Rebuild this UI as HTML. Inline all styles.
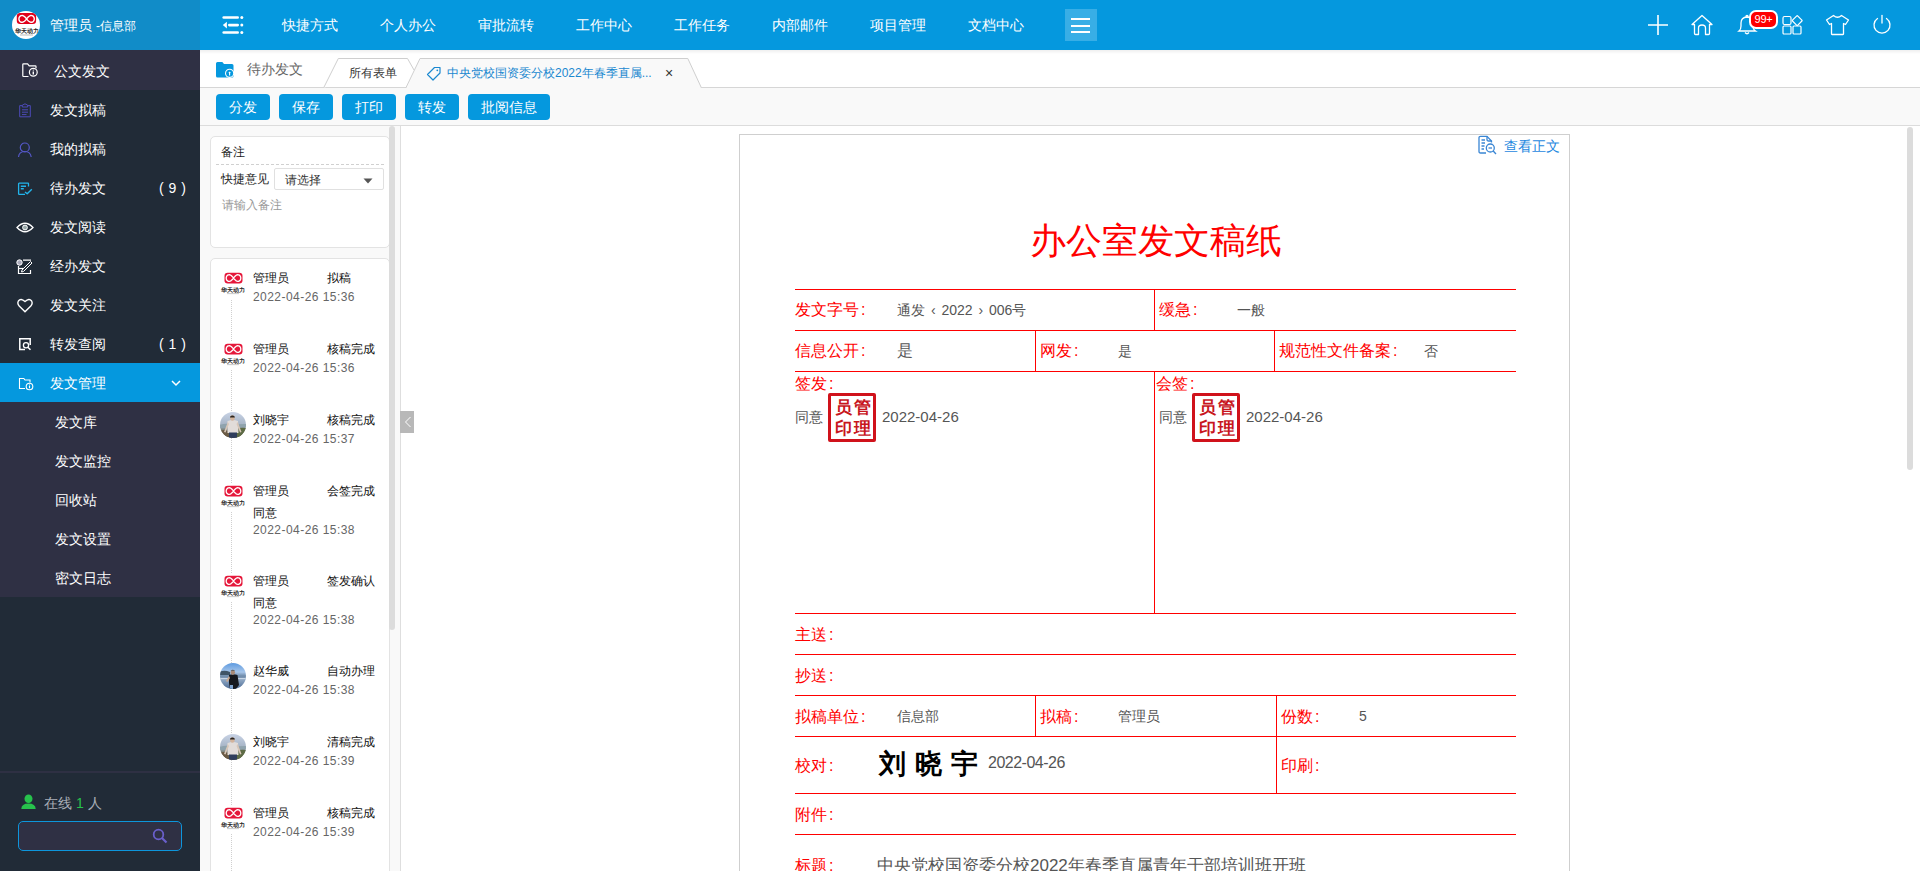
<!DOCTYPE html>
<html><head><meta charset="utf-8">
<style>
*{margin:0;padding:0;box-sizing:border-box}
html,body{width:1920px;height:871px;overflow:hidden;background:#fff;font-family:"Liberation Sans",sans-serif;}
.a{position:absolute;white-space:nowrap}
#hdr{position:absolute;left:0;top:0;width:1920px;height:50px;background:#0598de}
#hdrl{position:absolute;left:0;top:0;width:200px;height:50px;background:#118cc8}
.nav{position:absolute;top:17px;font-size:14px;line-height:16px;color:#fff}
#side{position:absolute;left:0;top:50px;width:200px;height:821px;background:#212b37}
.mi{position:absolute;left:0;width:200px;height:39px;color:#fff;font-size:14px}
.mi .t{position:absolute;left:50px;top:12px;line-height:16px}
.mi svg{position:absolute}
.sub .t{left:55px}
#main{position:absolute;left:200px;top:50px;width:1720px;height:821px;background:#fff}

.btn{top:94px;height:26px;background:#0598de;color:#fff;border-radius:4px;font-size:14px;line-height:26px;text-align:center}
.tn{position:absolute;font-size:12px;line-height:14px;color:#111;white-space:nowrap}
.td{position:absolute;font-size:12px;line-height:14px;color:#666;white-space:nowrap;letter-spacing:0.45px}
.av{width:26px;height:26px;border-radius:50%;overflow:hidden}
.hl{position:absolute;left:795px;width:721px;height:1px;background:#f00}
.vl{position:absolute;width:1px;background:#f00}
.lb{position:absolute;font-size:16px;line-height:18px;color:#f00;white-space:nowrap}
.lb b{font-weight:normal;margin-left:2px}
.vv{position:absolute;font-size:14px;line-height:16px;color:#555;white-space:nowrap}
.stamp{width:48px;height:49px;border:3px solid #d0121b;border-radius:2px}
.stamp span{position:absolute;font-family:'Liberation Serif',serif;font-weight:bold;font-size:17px;line-height:18px;color:#c8161d}
</style></head><body>
<svg width="0" height="0" style="position:absolute">
 <defs>
  <g id="lg">
   <rect x="6.5" y="1.7" width="18" height="10.7" rx="3.2" fill="#e5173a"/>
   <path d="M22.80 7.05 L22.62 8.24 L22.11 9.24 L21.38 9.93 L20.56 10.28 L19.73 10.34 L18.94 10.16 L18.23 9.82 L17.59 9.36 L17.01 8.83 L16.48 8.26 L15.98 7.66 L15.50 7.05 L15.02 6.44 L14.52 5.84 L13.99 5.27 L13.41 4.74 L12.77 4.28 L12.06 3.94 L11.27 3.76 L10.44 3.82 L9.62 4.17 L8.89 4.86 L8.38 5.86 L8.20 7.05 L8.38 8.24 L8.89 9.24 L9.62 9.93 L10.44 10.28 L11.27 10.34 L12.06 10.16 L12.77 9.82 L13.41 9.36 L13.99 8.83 L14.52 8.26 L15.02 7.66 L15.50 7.05 L15.98 6.44 L16.48 5.84 L17.01 5.27 L17.59 4.74 L18.23 4.28 L18.94 3.94 L19.73 3.76 L20.56 3.82 L21.38 4.17 L22.11 4.86 L22.62 5.86Z" fill="none" stroke="#fff" stroke-width="1.3"/>
   <text x="15.2" y="20.8" font-size="5.6" font-weight="bold" text-anchor="middle" fill="#222" font-family="Liberation Sans,sans-serif">华天动力</text>
   <rect x="9" y="22.3" width="12" height="0.8" fill="#bbb"/>
  </g>

  <clipPath id="cc"><circle cx="13" cy="13" r="13"/></clipPath>
  <linearGradient id="sky1" x1="0" y1="0" x2="0" y2="1"><stop offset="0" stop-color="#c9d3e6"/><stop offset="0.45" stop-color="#a9b7c8"/><stop offset="0.6" stop-color="#8f9da6"/><stop offset="0.75" stop-color="#6f705a"/><stop offset="1" stop-color="#5a4a38"/></linearGradient>
  <g id="av1" clip-path="url(#cc)">
   <rect width="26" height="26" fill="url(#sky1)"/>
   <path d="M0 13 Q6 11 12 12.5 L26 12 L26 15 L0 16Z" fill="#8fa3ad"/>
   <path d="M16 17 Q21 15 26 16 L26 26 L16 26Z" fill="#5d6b45"/>
   <path d="M0 19 Q4 17 8 19 L8 26 L0 26Z" fill="#6a5a45"/>
   <path d="M7.5 9 Q13 7 18 9 L18.5 21 L7.5 21Z" fill="#e2dcd9"/>
   <path d="M7.8 10 L4 20 L5.5 20.5 L9 12Z M17.8 10 L21.5 20 L20 20.5 L16.5 12Z" fill="#d8c6b8"/>
   <rect x="9" y="20.5" width="8" height="6" fill="#2f3d5c"/>
   <ellipse cx="12.4" cy="6" rx="2.3" ry="2.8" fill="#d3b49c"/>
   <path d="M10 4.8 Q12.4 2.2 14.8 4.8 L14.8 5.5 L10 5.5Z" fill="#2a2522"/>
  </g>
  <linearGradient id="sky2" x1="0" y1="0" x2="0" y2="1"><stop offset="0" stop-color="#5d9ae0"/><stop offset="0.35" stop-color="#a7c6ea"/><stop offset="0.5" stop-color="#6f8aa8"/><stop offset="0.65" stop-color="#8ea6c2"/><stop offset="1" stop-color="#4d6c96"/></linearGradient>
  <g id="av2" clip-path="url(#cc)">
   <rect width="26" height="26" fill="url(#sky2)"/>
   <path d="M0 8.5 Q5 7 10 9 L10 12 L0 12Z" fill="#3f5466"/>
   <rect x="0" y="15" width="26" height="1.2" fill="#c8d6e6"/>
   <path d="M9 12 Q13 10.5 17.5 12 L19 22 L16 26 L10 26 L9 20Z" fill="#15181e"/>
   <path d="M9 13 L6 18 L7.5 19 L10 15Z" fill="#c8a890"/>
   <ellipse cx="12.8" cy="9.3" rx="2.2" ry="2.6" fill="#a88a78"/>
   <path d="M10.6 8 Q12.8 5.5 15 8Z" fill="#666"/>
   <rect x="10" y="22" width="3" height="4" fill="#7fa4d0"/>
  </g>
 </defs>
</svg>
<!-- HEADER -->
<div id="hdr"></div>
<div id="hdrl"></div>
<div class="a" style="left:12px;top:11px;width:28px;height:28px;border-radius:50%;background:#fff;overflow:hidden">
  <svg width="28" height="28" viewBox="0 0 28 28"><rect x="4.8" y="1.9" width="19.3" height="11.1" rx="3.2" fill="#e0001b"/><path d="M22.30 7.90 L22.11 9.12 L21.57 10.15 L20.81 10.87 L19.93 11.23 L19.06 11.29 L18.23 11.11 L17.48 10.75 L16.80 10.28 L16.19 9.73 L15.63 9.14 L15.11 8.53 L14.60 7.90 L14.09 7.27 L13.57 6.66 L13.01 6.07 L12.40 5.52 L11.72 5.05 L10.97 4.69 L10.14 4.51 L9.27 4.57 L8.39 4.93 L7.63 5.65 L7.09 6.68 L6.90 7.90 L7.09 9.12 L7.63 10.15 L8.39 10.87 L9.27 11.23 L10.14 11.29 L10.97 11.11 L11.72 10.75 L12.40 10.28 L13.01 9.73 L13.57 9.14 L14.09 8.53 L14.60 7.90 L15.11 7.27 L15.63 6.66 L16.19 6.07 L16.80 5.52 L17.48 5.05 L18.23 4.69 L19.06 4.51 L19.93 4.57 L20.81 4.93 L21.57 5.65 L22.11 6.68Z" fill="none" stroke="#fff" stroke-width="1.4"/><text x="14.7" y="21.8" font-size="5.6" font-weight="bold" text-anchor="middle" fill="#222" font-family="Liberation Sans,sans-serif">华天动力</text><rect x="8" y="23.5" width="13" height="1" fill="#bbb"/></svg>
</div>
<div class="a" style="left:50px;top:17px;font-size:14px;line-height:16px;color:#fff">管理员 <span style="font-size:12px">-信息部</span></div>
<svg class="a" style="left:221px;top:14px" width="24" height="22" viewBox="0 0 24 22">
 <rect x="1.4" y="2.2" width="16.6" height="2.6" rx="1.3" fill="#fff"/>
 <rect x="7" y="9.8" width="11" height="2.6" rx="1.3" fill="#fff"/>
 <rect x="1.4" y="17.2" width="16.6" height="2.6" rx="1.3" fill="#fff"/>
 <path d="M1.8 11.1 L5.9 7.7 L5.9 14.5Z" fill="#fff"/>
 <circle cx="20.8" cy="3.5" r="1.5" fill="#fff"/><circle cx="20.8" cy="11.1" r="1.5" fill="#fff"/><circle cx="20.8" cy="18.5" r="1.5" fill="#fff"/>
</svg>
<div class="nav" style="left:282px">快捷方式</div>
<div class="nav" style="left:380px">个人办公</div>
<div class="nav" style="left:478px">审批流转</div>
<div class="nav" style="left:576px">工作中心</div>
<div class="nav" style="left:674px">工作任务</div>
<div class="nav" style="left:772px">内部邮件</div>
<div class="nav" style="left:870px">项目管理</div>
<div class="nav" style="left:968px">文档中心</div>
<div class="a" style="left:1065px;top:9px;width:32px;height:32px;background:#38aee6"></div>
<div class="a" style="left:1071px;top:18px;width:19px;height:2px;background:#fff"></div>
<div class="a" style="left:1071px;top:25px;width:19px;height:2px;background:#fff"></div>
<div class="a" style="left:1071px;top:31px;width:19px;height:2px;background:#fff"></div>
<!-- right icons -->
<svg class="a" style="left:1646px;top:13px" width="24" height="24" viewBox="0 0 24 24" fill="none" stroke="#fff" stroke-width="1.6"><path d="M12 2v20M2 12h20"/></svg>
<svg class="a" style="left:1690px;top:14px" width="24" height="22" viewBox="0 0 24 22" fill="none" stroke="#fff" stroke-width="1.3" stroke-linejoin="round"><path d="M2 10.5 L12 1.5 L22 10.5 L19.5 10.5 L19.5 19.5 Q19.5 20.5 18.5 20.5 L15.5 20.5 L15.5 14 Q15.5 11 12 11 Q8.5 11 8.5 14 L8.5 20.5 L5.5 20.5 Q4.5 20.5 4.5 19.5 L4.5 10.5Z"/></svg>
<svg class="a" style="left:1737px;top:14px" width="22" height="22" viewBox="0 0 22 22" fill="none" stroke="#fff" stroke-width="1.3"><path d="M2 17 Q4 15.5 4 12 L4 9 Q4 3.5 10 3 Q16 3.5 16 9 L16 12 Q16 15.5 18.5 17Z"/><path d="M8 18.5 Q10 21 12 18.5"/><circle cx="10" cy="2.3" r="1"/></svg>
<svg class="a" style="left:1782px;top:15px" width="21" height="20" viewBox="0 0 21 20" fill="none" stroke="#fff" stroke-width="1.2"><rect x="1" y="1.5" width="8" height="8" rx="1.5"/><path d="M15.6 0.9 L19.9 5.2 Q20.3 5.6 19.9 6 L15.6 10.3 Q15.2 10.7 14.8 10.3 L10.5 6 Q10.1 5.6 10.5 5.2 L14.8 0.9 Q15.2 0.5 15.6 0.9Z"/><rect x="1" y="11" width="8" height="8" rx="1"/><rect x="11" y="11" width="8" height="8" rx="1"/></svg>
<svg class="a" style="left:1825px;top:14px" width="25" height="22" viewBox="0 0 25 22" fill="none" stroke="#fff" stroke-width="1.3" stroke-linejoin="round"><path d="M8.5 1.5 Q12.5 5 16.5 1.5 L23.5 6 L20.5 10.5 L18.5 9.5 L18.5 20 Q18.5 20.5 18 20.5 L7 20.5 Q6.5 20.5 6.5 20 L6.5 9.5 L4.5 10.5 L1.5 6Z"/></svg>
<svg class="a" style="left:1871px;top:14px" width="22" height="21" viewBox="0 0 22 21" fill="none" stroke="#fff" stroke-width="1.3" stroke-linecap="round"><path d="M11 1.5 L11 9"/><path d="M6.5 4.5 A8 8 0 1 0 15.5 4.5"/></svg>
<div class="a" style="left:1749px;top:10px;width:29px;height:19px;border-radius:7px;background:#f20f0f;border:2px solid #fff;color:#fff;font-size:11px;line-height:15px;text-align:center;letter-spacing:-0.2px;background:#ff0000">99+</div>
<!-- SIDEBAR -->
<div id="side"></div>
<div class="a" style="left:0;top:50px;width:200px;height:40px;background:#2f3044"></div>
<div class="a" style="left:0;top:363px;width:200px;height:39px;background:#0598de"></div>
<div class="a" style="left:0;top:402px;width:200px;height:195px;background:#2f3044"></div>
<div class="a" style="left:0;top:771px;width:200px;height:2px;background:#2e3043"></div>
<!-- folder icon 1 -->
<svg class="a" style="left:21px;top:62px" width="18" height="17" viewBox="0 0 18 17" fill="none" stroke="#fff" stroke-width="1.2" stroke-linejoin="round"><path d="M7.5 14.5 L2.5 14.5 Q1.8 14.5 1.8 13.8 L1.8 2.6 Q1.8 1.9 2.5 1.9 L6.6 1.9 L8.2 3.9 L14.3 3.9 Q15 3.9 15 4.6 L15 6.3"/><circle cx="12.3" cy="10.3" r="3.9"/><path d="M12.3 9.6 V12.6" stroke-width="1.4"/><circle cx="12.3" cy="8.1" r="0.6" fill="#fff" stroke="none"/></svg>
<div class="a" style="left:54px;top:63px;font-size:14px;line-height:16px;color:#fff">公文发文</div>
<!-- clipboard -->
<svg class="a" style="left:18px;top:103px" width="14" height="15" viewBox="0 0 14 15" fill="none" stroke="#4d4ab8" stroke-width="1"><path d="M4.3 2.6 L1.7 2.6 L1.7 13.8 L12.3 13.8 L12.3 2.6 L9.7 2.6"/><path d="M4.3 4 L4.3 2.2 L7 0.8 L9.7 2.2 L9.7 4Z"/><path d="M4 6.8 H10 M4 9.2 H10 M4 11.6 H8.5"/></svg>
<div class="a" style="left:50px;top:102px;font-size:14px;line-height:16px;color:#fff">发文拟稿</div>
<!-- person -->
<svg class="a" style="left:17px;top:142px" width="16" height="16" viewBox="0 0 16 16" fill="none" stroke="#5558c8" stroke-width="1.2"><circle cx="7.8" cy="5.5" r="4.5"/><path d="M1.5 15 Q2 9.5 7.8 9.5 Q13.5 9.5 14.2 15"/></svg>
<div class="a" style="left:50px;top:141px;font-size:14px;line-height:16px;color:#fff">我的拟稿</div>
<!-- doc check -->
<svg class="a" style="left:17px;top:182px" width="16" height="14" viewBox="0 0 16 14" fill="none" stroke="#22b4ea" stroke-width="1.3" stroke-linejoin="round"><path d="M11.5 4.5 L11.5 1.8 Q11.5 1.2 10.9 1.2 L2.2 1.2 Q1.6 1.2 1.6 1.8 L1.6 11.8 Q1.6 12.4 2.2 12.4 L8 12.4"/><path d="M3.8 4.2 H9 M3.8 6.8 H6.8" stroke-width="1.4"/><path d="M8 10 L10.2 11.8 L14.8 7.2" stroke-width="1.4"/></svg>
<div class="a" style="left:50px;top:180px;font-size:14px;line-height:16px;color:#fff">待办发文</div>
<div class="a" style="left:159px;top:180px;font-size:14px;line-height:16px;color:#fff;letter-spacing:0.5px">( 9 )</div>
<!-- eye -->
<svg class="a" style="left:16px;top:221px" width="18" height="13" viewBox="0 0 18 13" fill="none" stroke="#fff" stroke-width="1.3"><path d="M1 6.5 Q9 -2 17 6.5 Q9 15 1 6.5Z"/><circle cx="9" cy="6.5" r="2.4" fill="#9aa" stroke="#fff" stroke-width="1"/></svg>
<div class="a" style="left:50px;top:219px;font-size:14px;line-height:16px;color:#fff">发文阅读</div>
<!-- edit -->
<svg class="a" style="left:16px;top:258px" width="18" height="17" viewBox="0 0 18 17" fill="none" stroke="#fff" stroke-width="1.2"><path d="M7 2.2 H15 M2.5 8 V15.5 H14.5 V12"/><path d="M6 12 L14.5 3.5 L16 5 L7.5 13.5 L5.5 14Z" stroke-width="1"/><circle cx="3.5" cy="4.5" r="2.7" fill="#aab" stroke="#fff" stroke-width="1"/><path d="M3 10.5 H8"/></svg>
<div class="a" style="left:50px;top:258px;font-size:14px;line-height:16px;color:#fff">经办发文</div>
<!-- heart -->
<svg class="a" style="left:17px;top:298px" width="16" height="15" viewBox="0 0 16 15" fill="none" stroke="#fff" stroke-width="1.4"><path d="M8 13.8 L2.2 8 Q0 5.5 1.4 3 Q3.8 -0.2 8 3.6 Q12.2 -0.2 14.6 3 Q16 5.5 13.8 8Z"/></svg>
<div class="a" style="left:50px;top:297px;font-size:14px;line-height:16px;color:#fff">发文关注</div>
<!-- search doc -->
<svg class="a" style="left:18px;top:337px" width="14" height="14" viewBox="0 0 14 14" fill="none" stroke="#fff" stroke-width="1.5"><path d="M7 12.5 H1.8 V1.8 H12.2 V8"/><circle cx="8" cy="8.3" r="2.6" stroke-width="1.3"/><path d="M9.8 10.2 L12.5 12.8" stroke-width="1.5"/></svg>
<div class="a" style="left:50px;top:336px;font-size:14px;line-height:16px;color:#fff">转发查阅</div>
<div class="a" style="left:159px;top:336px;font-size:14px;line-height:16px;color:#fff;letter-spacing:0.5px">( 1 )</div>
<!-- folder 2 -->
<svg class="a" style="left:18px;top:377px" width="16" height="14" viewBox="0 0 16 14" fill="none" stroke="#fff" stroke-width="1.1"><path d="M7 11.5 L1.5 11.5 L1.5 1.5 L5.8 1.5 L7 3 L12 3 L12 5.5"/><circle cx="11.5" cy="9.5" r="3.3"/><path d="M11.5 8.6 V11.3 M11.5 7.4 V7.9"/></svg>
<div class="a" style="left:50px;top:375px;font-size:14px;line-height:16px;color:#fff">发文管理</div>
<svg class="a" style="left:171px;top:380px" width="10" height="7" viewBox="0 0 10 7" fill="none" stroke="#fff" stroke-width="1.5"><path d="M1 1 L5 5 L9 1"/></svg>
<div class="a" style="left:55px;top:414px;font-size:14px;line-height:16px;color:#fff">发文库</div>
<div class="a" style="left:55px;top:453px;font-size:14px;line-height:16px;color:#fff">发文监控</div>
<div class="a" style="left:55px;top:492px;font-size:14px;line-height:16px;color:#fff">回收站</div>
<div class="a" style="left:55px;top:531px;font-size:14px;line-height:16px;color:#fff">发文设置</div>
<div class="a" style="left:55px;top:570px;font-size:14px;line-height:16px;color:#fff">密文日志</div>
<!-- online -->
<svg class="a" style="left:21px;top:794px" width="16" height="16" viewBox="0 0 16 16"><ellipse cx="7.5" cy="4.8" rx="4" ry="4.3" fill="#27c24c"/><path d="M0.3 15 Q0.5 9.5 7.5 9.5 Q14.5 9.5 14.7 15Z" fill="#27c24c"/></svg>
<div class="a" style="left:44px;top:795px;font-size:14px;line-height:16px;color:#a7adb6">在线 <span style="color:#27c24c">1</span> 人</div>
<div class="a" style="left:18px;top:821px;width:164px;height:30px;border:1.5px solid #0d96dc;border-radius:5px;background:#2f3044"></div>
<svg class="a" style="left:152px;top:828px" width="16" height="16" viewBox="0 0 16 16" fill="none" stroke="#6a5fcb" stroke-width="1.8"><circle cx="6.5" cy="6.5" r="4.8"/><path d="M10 10 L14.5 14.5" stroke-width="2.2"/></svg>
<!-- TAB BAR -->
<div class="a" style="left:200px;top:50px;width:1720px;height:37px;background:#fff"></div>
<div class="a" style="left:200px;top:50px;width:1720px;height:4px;background:linear-gradient(#efefef,rgba(255,255,255,0))"></div>
<svg class="a" style="left:215px;top:61px" width="21" height="19" viewBox="0 0 21 19"><path d="M1 2.5 Q1 1 2.5 1 L7.3 1 L9 3 L17 3 Q18.5 3 18.5 4.5 L18.5 15 Q18.5 16.5 17 16.5 L2.5 16.5 Q1 16.5 1 15Z" fill="#0598de"/><circle cx="14.6" cy="12.3" r="4.6" fill="#fff"/><circle cx="14.6" cy="12.3" r="3.5" fill="#0598de"/><path d="M14.6 11.6 V14.6" stroke="#fff" stroke-width="1.1"/><path d="M13.3 12 L14.6 10.4 L15.9 12" fill="#fff"/></svg>
<div class="a" style="left:247px;top:61px;font-size:14px;line-height:16px;color:#666">待办发文</div>
<svg class="a" style="left:200px;top:50px" width="520" height="38" viewBox="0 0 520 38">
 <path d="M0 37.5 H206" stroke="#d6d6d6" stroke-width="1"/>
 <path d="M501 37.5 H520" stroke="#d6d6d6" stroke-width="1"/>
 <path d="M123.8 37.5 L138.3 8.5 L207.5 8.5 L214 20" fill="#fff" stroke="#cfcfcf" stroke-width="1"/>
 <path d="M205.8 38 L220 8.5 L487.8 8.5 L501.5 38Z" fill="#f9f9f9"/>
 <path d="M205.8 38 L220 8.5 L487.8 8.5 L501.5 38" fill="none" stroke="#cfcfcf" stroke-width="1"/>
</svg>
<div class="a" style="left:701px;top:87px;width:1219px;height:1px;background:#d6d6d6"></div>
<div class="a" style="left:349px;top:66px;font-size:12px;line-height:14px;color:#333">所有表单</div>
<svg class="a" style="left:426px;top:66px" width="16" height="15" viewBox="0 0 16 15" fill="none" stroke="#1a88d0" stroke-width="1.2"><path d="M1.5 8.5 L8.5 1.5 L14 1.5 L14 7 L7 14Z" stroke-linejoin="round"/><circle cx="11.3" cy="4.3" r="0.9" fill="#1a88d0" stroke="none"/></svg>
<div class="a" style="left:447px;top:66px;font-size:12px;line-height:14px;color:#1a88d0">中央党校国资委分校2022年春季直属...</div>
<div class="a" style="left:665px;top:66px;font-size:14px;line-height:14px;color:#333">×</div>
<!-- TOOLBAR -->
<div class="a" style="left:200px;top:88px;width:1720px;height:37px;background:#f9f9f9"></div>
<div class="a" style="left:200px;top:125px;width:1720px;height:1px;background:#dcdcdc"></div>
<div class="btn a" style="left:216px;width:54px">分发</div>
<div class="btn a" style="left:279px;width:54px">保存</div>
<div class="btn a" style="left:342px;width:54px">打印</div>
<div class="btn a" style="left:405px;width:54px">转发</div>
<div class="btn a" style="left:468px;width:82px">批阅信息</div>
<!-- LEFT PANEL -->
<div class="a" style="left:200px;top:126px;width:200px;height:745px;background:#f9f9f9"></div>
<div class="a" style="left:400px;top:126px;width:1px;height:745px;background:#dedede"></div>
<div class="a" style="left:210px;top:136px;width:180px;height:112px;background:#fff;border:1px solid #e3e3e3;border-radius:5px"></div>
<div class="a" style="left:221px;top:145px;font-size:12px;line-height:14px;color:#222">备注</div>
<div class="a" style="left:216px;top:164px;width:168px;height:0;border-top:1px dashed #d0d0d0"></div>
<div class="a" style="left:221px;top:172px;font-size:12px;line-height:14px;color:#222">快捷意见</div>
<div class="a" style="left:274px;top:168px;width:110px;height:22px;background:#fff;border:1px solid #e0e0e0;border-radius:2px"></div>
<div class="a" style="left:285px;top:173px;font-size:12px;line-height:14px;color:#333">请选择</div>
<svg class="a" style="left:363px;top:178px" width="10" height="6" viewBox="0 0 10 6"><path d="M0.5 0.5 H9.5 L5 5.5Z" fill="#555"/></svg>
<div class="a" style="left:222px;top:198px;font-size:12px;line-height:14px;color:#999">请输入备注</div>
<div class="a" style="left:210px;top:258px;width:180px;height:640px;background:#fff;border:1px solid #e3e3e3;border-radius:5px"></div>
<div class="a" style="left:389px;top:126px;width:6px;height:504px;background:#dcdcdc;border-radius:3px"></div>
<div class="a" style="left:400px;top:411px;width:14px;height:22px;background:#b8b8b8"></div>
<svg class="a" style="left:404px;top:416px" width="8" height="12" viewBox="0 0 8 12" fill="none" stroke="#fff" stroke-width="1"><path d="M6.5 1 L1.5 6 L6.5 11"/></svg>
<div class="a" style="left:231px;top:300px;width:0;height:571px;border-left:1px dotted #cfcfcf"></div>
<div class="a" style="left:218px;top:271px;width:28px;height:28px;background:#fff"><svg width="28" height="28" viewBox="0 0 28 28"><use href="#lg"/></svg></div>
<div class="tn" style="left:253px;top:271px">管理员</div>
<div class="tn" style="left:327px;top:271px">拟稿</div>
<div class="td" style="left:253px;top:290px">2022-04-26 15:36</div>
<div class="a" style="left:218px;top:342px;width:28px;height:28px;background:#fff"><svg width="28" height="28" viewBox="0 0 28 28"><use href="#lg"/></svg></div>
<div class="tn" style="left:253px;top:342px">管理员</div>
<div class="tn" style="left:327px;top:342px">核稿完成</div>
<div class="td" style="left:253px;top:361px">2022-04-26 15:36</div>
<svg class="a" style="left:220px;top:412px" width="26" height="26" viewBox="0 0 26 26"><use href="#av1"/></svg>
<div class="tn" style="left:253px;top:413px">刘晓宇</div>
<div class="tn" style="left:327px;top:413px">核稿完成</div>
<div class="td" style="left:253px;top:432px">2022-04-26 15:37</div>
<div class="a" style="left:218px;top:484px;width:28px;height:28px;background:#fff"><svg width="28" height="28" viewBox="0 0 28 28"><use href="#lg"/></svg></div>
<div class="tn" style="left:253px;top:484px">管理员</div>
<div class="tn" style="left:327px;top:484px">会签完成</div>
<div class="tn" style="left:253px;top:506px">同意</div>
<div class="td" style="left:253px;top:523px">2022-04-26 15:38</div>
<div class="a" style="left:218px;top:574px;width:28px;height:28px;background:#fff"><svg width="28" height="28" viewBox="0 0 28 28"><use href="#lg"/></svg></div>
<div class="tn" style="left:253px;top:574px">管理员</div>
<div class="tn" style="left:327px;top:574px">签发确认</div>
<div class="tn" style="left:253px;top:596px">同意</div>
<div class="td" style="left:253px;top:613px">2022-04-26 15:38</div>
<svg class="a" style="left:220px;top:663px" width="26" height="26" viewBox="0 0 26 26"><use href="#av2"/></svg>
<div class="tn" style="left:253px;top:664px">赵华威</div>
<div class="tn" style="left:327px;top:664px">自动办理</div>
<div class="td" style="left:253px;top:683px">2022-04-26 15:38</div>
<svg class="a" style="left:220px;top:734px" width="26" height="26" viewBox="0 0 26 26"><use href="#av1"/></svg>
<div class="tn" style="left:253px;top:735px">刘晓宇</div>
<div class="tn" style="left:327px;top:735px">清稿完成</div>
<div class="td" style="left:253px;top:754px">2022-04-26 15:39</div>
<div class="a" style="left:218px;top:806px;width:28px;height:28px;background:#fff"><svg width="28" height="28" viewBox="0 0 28 28"><use href="#lg"/></svg></div>
<div class="tn" style="left:253px;top:806px">管理员</div>
<div class="tn" style="left:327px;top:806px">核稿完成</div>
<div class="td" style="left:253px;top:825px">2022-04-26 15:39</div>
<!-- DOC -->
<div class="a" style="left:739px;top:134px;width:831px;height:800px;border:1px solid #cfcfcf;background:#fff"></div>
<div class="a" style="left:1907px;top:127px;width:6px;height:343px;background:#dcdcdc;border-radius:3px"></div>
<svg class="a" style="left:1477px;top:135px" width="23" height="21" viewBox="0 0 23 21" fill="none" stroke="#3a86d4" stroke-width="1.3"><path d="M9 18 H3.5 Q2 18 2 16.5 V2.8 Q2 1.3 3.5 1.3 H10 L14.5 6 V7.5"/><path d="M10 1.3 V4.5 Q10 6 11.5 6 H14.5"/><path d="M4.5 5 H8 M4.5 8 H8 M4.5 11 H7.5 M4.5 14 H7"/><circle cx="13.3" cy="13" r="4"/><path d="M16.2 16 L19 19"/><path d="M11.5 13 H15"/></svg>
<div class="a" style="left:1504px;top:138px;font-size:14px;line-height:16px;color:#1e88e0">查看正文</div>
<div class="a" style="left:1030px;top:221px;font-size:36px;line-height:40px;color:#f00">办公室发文稿纸</div>
<!-- table lines -->
<div class="hl" style="top:289px"></div>
<div class="hl" style="top:330px"></div>
<div class="hl" style="top:371px"></div>
<div class="hl" style="top:613px"></div>
<div class="hl" style="top:654px"></div>
<div class="hl" style="top:695px"></div>
<div class="hl" style="top:736px"></div>
<div class="hl" style="top:793px"></div>
<div class="hl" style="top:834px"></div>
<div class="vl" style="left:1154px;top:289px;height:41px"></div>
<div class="vl" style="left:1035px;top:330px;height:41px"></div>
<div class="vl" style="left:1274px;top:330px;height:41px"></div>
<div class="vl" style="left:1154px;top:371px;height:242px"></div>
<div class="vl" style="left:1035px;top:695px;height:41px"></div>
<div class="vl" style="left:1276px;top:695px;height:98px"></div>
<!-- labels -->
<div class="lb" style="left:795px;top:301px">发文字号<b>:</b></div>
<div class="vv" style="left:897px;top:302px;word-spacing:2px">通发 ‹ 2022 › 006号</div>
<div class="lb" style="left:1159px;top:301px">缓急<b>:</b></div>
<div class="vv" style="left:1237px;top:302px">一般</div>
<div class="lb" style="left:795px;top:342px">信息公开<b>:</b></div>
<div class="vv" style="left:897px;top:342px;font-size:16px;line-height:18px">是</div>
<div class="lb" style="left:1040px;top:342px">网发<b>:</b></div>
<div class="vv" style="left:1118px;top:343px">是</div>
<div class="lb" style="left:1279px;top:342px">规范性文件备案<b>:</b></div>
<div class="vv" style="left:1424px;top:343px">否</div>
<div class="lb" style="left:795px;top:375px">签发<b>:</b></div>
<div class="lb" style="left:1156px;top:375px">会签<b>:</b></div>
<div class="vv" style="left:795px;top:409px">同意</div>
<div class="stamp a" style="left:828px;top:393px"><span style="left:4px;top:3px">员</span><span style="left:23px;top:3px">管</span><span style="left:4px;top:24px">印</span><span style="left:23px;top:24px">理</span></div>
<div class="vv" style="left:882px;top:408px;font-size:15px;line-height:17px">2022-04-26</div>
<div class="vv" style="left:1159px;top:409px">同意</div>
<div class="stamp a" style="left:1192px;top:393px"><span style="left:4px;top:3px">员</span><span style="left:23px;top:3px">管</span><span style="left:4px;top:24px">印</span><span style="left:23px;top:24px">理</span></div>
<div class="vv" style="left:1246px;top:408px;font-size:15px;line-height:17px">2022-04-26</div>
<div class="lb" style="left:795px;top:626px">主送<b>:</b></div>
<div class="lb" style="left:795px;top:667px">抄送<b>:</b></div>
<div class="lb" style="left:795px;top:708px">拟稿单位<b>:</b></div>
<div class="vv" style="left:897px;top:708px">信息部</div>
<div class="lb" style="left:1040px;top:708px">拟稿<b>:</b></div>
<div class="vv" style="left:1118px;top:708px">管理员</div>
<div class="lb" style="left:1281px;top:708px">份数<b>:</b></div>
<div class="vv" style="left:1359px;top:708px">5</div>
<div class="lb" style="left:795px;top:757px">校对<b>:</b></div>
<div class="a" style="left:879px;top:748px;font-family:'Liberation Serif',serif;font-size:27px;line-height:32px;font-weight:bold;color:#000;letter-spacing:9px">刘晓宇</div>
<div class="vv" style="left:988px;top:754px;font-size:16px;line-height:18px;letter-spacing:-0.5px">2022-04-26</div>
<div class="lb" style="left:1281px;top:757px">印刷<b>:</b></div>
<div class="lb" style="left:795px;top:806px">附件<b>:</b></div>
<div class="lb" style="left:795px;top:857px">标题<b>:</b></div>
<div class="vv" style="left:877px;top:856px;font-size:17px;line-height:19px">中央党校国资委分校2022年春季直属青年干部培训班开班</div>
</body></html>
